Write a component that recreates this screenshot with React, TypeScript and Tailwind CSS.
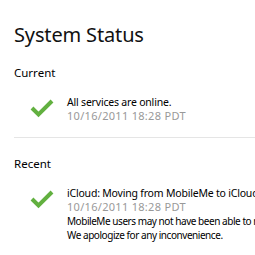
import React from "react";

const Check = () => (
  <svg width="26" height="20" viewBox="0 0 26 20" className="shrink-0">
    <path d="M3 10 L9.5 16.5 L23 3" fill="none" stroke="#62b040" strokeWidth="4" strokeLinecap="butt" strokeLinejoin="miter" />
  </svg>
);

export default function App() {
  return (
    <div className="w-[255px] h-[255px] overflow-hidden bg-white text-[#111]" style={{ fontFamily: '"Noto Sans", sans-serif' }}>
      <div className="w-[400px] pl-[14px]">
        <h1 className="pt-[22px] text-[20px] leading-[26px] text-[#111] tracking-[-0.15px]">System Status</h1>
        <h2 className="mt-[17px] text-[11.5px] leading-[16px] text-[#000]">Current</h2>
        <div className="flex mt-[14px] pl-[15px] gap-[12px]">
          <div className="pt-[3px]"><Check /></div>
          <div className="whitespace-nowrap leading-[14px]">
            <div className="text-[10.5px] text-[#000] tracking-[-0.2px]">All services are online.</div>
            <div className="text-[11px] text-[#999] tracking-[0.3px]">10/16/2011 18:28 PDT</div>
          </div>
        </div>
        <div className="mt-[14px] border-t border-[#e5e5e5]" />
        <h2 className="mt-[18px] text-[11.5px] leading-[16px] text-[#000]">Recent</h2>
        <div className="flex mt-[14px] pl-[15px] gap-[12px]">
          <div className="pt-[3px]"><Check /></div>
          <div className="whitespace-nowrap leading-[14px]">
            <div className="text-[10.5px] text-[#000] tracking-[-0.2px]">iCloud: Moving from MobileMe to iCloud</div>
            <div className="text-[11px] text-[#999] tracking-[0.3px]">10/16/2011 18:28 PDT</div>
            <div className="text-[10px] text-[#000] tracking-[-0.45px]">MobileMe users may not have been able to migrate</div>
            <div className="text-[10px] text-[#000] tracking-[-0.45px]">We apologize for any inconvenience.</div>
          </div>
        </div>
        <div className="mt-[15px] border-t border-[#e5e5e5]" />
      </div>
    </div>
  );
}
